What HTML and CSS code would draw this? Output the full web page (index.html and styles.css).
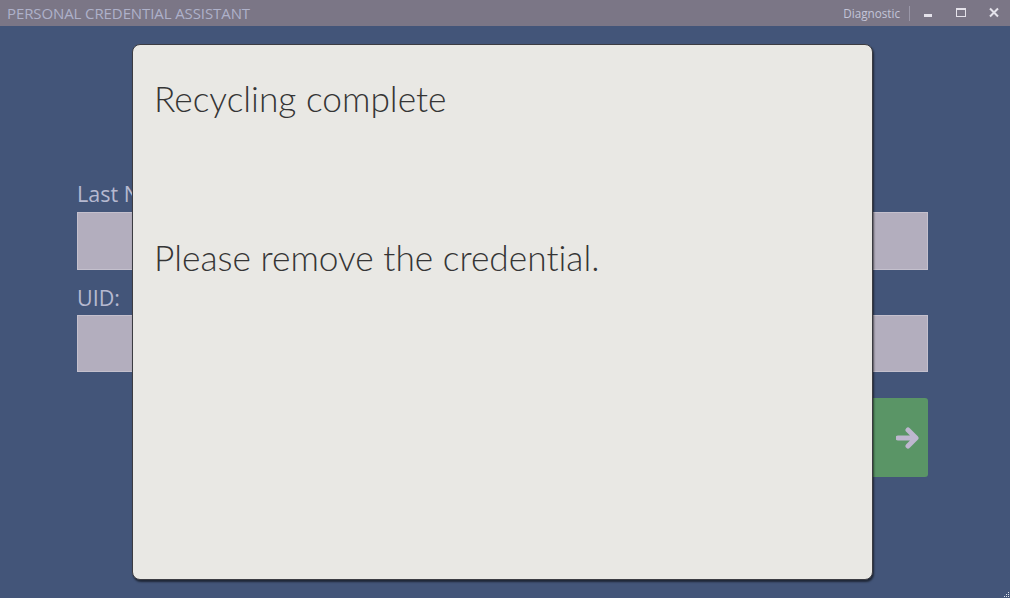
FILE: index.html
```html
<!DOCTYPE html>
<html>
<head>
<meta charset="utf-8">
<link rel="stylesheet" href="styles.css">
</head>
<body>
<div class="app">
  <div class="titlebar">
    <div class="app-title">PERSONAL CREDENTIAL ASSISTANT</div>
    <div class="controls">
      <span class="diag">Diagnostic</span>
      <span class="sep"></span>
      <span class="ctl"><svg width="12" height="12" viewBox="0 0 12 12"><rect x="2" y="7" width="8" height="3" fill="#e4e2ea"/></svg></span>
      <span class="ctl"><svg width="12" height="12" viewBox="0 0 12 12"><rect x="1.5" y="1.5" width="9" height="8" fill="none" stroke="#e4e2ea" stroke-width="1"/><rect x="1" y="1" width="10" height="2" fill="#e4e2ea"/></svg></span>
      <span class="ctl"><svg width="12" height="12" viewBox="0 0 12 12"><path d="M2 1.5 L10 9.5 M10 1.5 L2 9.5" stroke="#e4e2ea" stroke-width="2"/></svg></span>
    </div>
  </div>
  <div class="main">
    <label class="lbl first">Last Name:</label>
    <div class="field f1"></div>
    <label class="lbl second">UID:</label>
    <div class="field f2"></div>
    <div class="actions">
      <div class="go"><svg width="24" height="24" viewBox="0 0 24 24"><path d="M2 12 H19 M12 4 L20 12 L12 20" fill="none" stroke="#beb7cf" stroke-width="5" stroke-linecap="round" stroke-linejoin="round"/></svg></div>
    </div>
    <svg class="grip" width="7" height="7" viewBox="0 0 7 7"><rect x="5" y="1" width="1" height="1" fill="#dfe3ee"/><rect x="3" y="3" width="1" height="1" fill="#dfe3ee"/><rect x="5" y="3" width="1" height="1" fill="#dfe3ee"/><rect x="1" y="5" width="1" height="1" fill="#dfe3ee"/><rect x="3" y="5" width="1" height="1" fill="#dfe3ee"/><rect x="5" y="5" width="1" height="1" fill="#dfe3ee"/></svg>
  </div>
  <div class="modal">
    <h1 class="modal-title">Recycling complete</h1>
    <p class="modal-msg">Please remove the credential.</p>
  </div>
</div>
</body>
</html>
```
FILE: styles.css
```css
* { box-sizing: border-box; }
html, body { margin: 0; padding: 0; }
body {
  width: 1010px;
  height: 598px;
  overflow: hidden;
  background: #435579;
  font-family: "Open Sans", "Noto Sans", sans-serif;
}
.app {
  position: relative;
  width: 1010px;
  height: 598px;
  display: flex;
  flex-direction: column;
}
.titlebar {
  height: 26px;
  background: #7b7686;
  display: flex;
  align-items: center;
  justify-content: space-between;
  padding-left: 7px;
}
.app-title {
  color: #aeb1ca;
  font-size: 15px;
  letter-spacing: -0.1px;
}
.controls {
  display: flex;
  align-items: center;
  height: 26px;
}
.diag {
  color: #c3c5d8;
  font-size: 11.7px;
  margin-right: 9px;
}
.sep {
  width: 1px;
  height: 15px;
  background: #9a97a8;
  margin-right: 12px;
}
.ctl {
  width: 33px;
  display: flex;
  align-items: center;
  justify-content: flex-start;
}
.ctl:last-child { width: 22px; }
.main {
  flex: 1;
  position: relative;
  padding: 154px 82px 0 77px;
  display: flex;
  flex-direction: column;
}
.lbl {
  color: #b6b9d0;
  font-size: 21.5px;
  line-height: 28px;
  height: 28px;
}
.lbl.second { margin-top: 14px; }
.field {
  background: #b3aebe;
  border: 1px solid #c4c0cd;
}
.f1 { margin-top: 4px; height: 58px; }
.f2 { margin-top: 3px; height: 57px; }
.actions {
  display: flex;
  justify-content: flex-end;
  margin-top: 26px;
}
.go {
  width: 80px;
  height: 79px;
  background: #5a9566;
  border-radius: 3px;
  display: flex;
  align-items: center;
  justify-content: flex-end;
  padding-right: 8px;
}
.grip {
  position: absolute;
  right: 0;
  bottom: 0;
}
.modal {
  position: absolute;
  left: 132px;
  top: 44px;
  width: 741px;
  height: 536px;
  background: #e9e8e4;
  border: 1px solid #3c3c42;
  border-radius: 8px;
  box-shadow: 1px 2px 2px rgba(0,0,0,0.55);
  padding: 33px 22px 0 21px;
  font-family: "Lato", sans-serif;
  font-weight: 300;
  font-variant-ligatures: none;
  color: #353535;
}
.modal-title {
  margin: 0;
  font-size: 35.3px;
  font-weight: 300;
  line-height: 41px;
}
.modal-msg {
  margin: 118px 0 0 0;
  font-size: 35.3px;
  line-height: 41px;
}
```
